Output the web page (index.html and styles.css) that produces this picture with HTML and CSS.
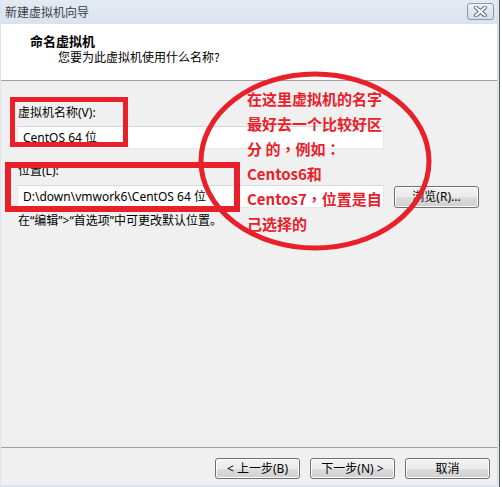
FILE: index.html
```html
<!DOCTYPE html>
<html>
<head>
<meta charset="utf-8">
<link rel="stylesheet" href="styles.css">
</head>
<body>
<div class="screen">
  <div class="window">
    <div class="titlebar">
      <span class="title">新建虚拟机向导</span>
      <div class="close">
        <svg width="17" height="11" viewBox="0 0 17 11">
          <path d="M4 1.5 L13 9.5 M13 1.5 L4 9.5" stroke="#5a6478" stroke-width="4" stroke-linecap="round"/>
          <path d="M4 1.5 L13 9.5 M13 1.5 L4 9.5" stroke="#ffffff" stroke-width="2.2" stroke-linecap="round"/>
        </svg>
      </div>
    </div>
    <div class="client">
      <div class="header">
        <div class="h-title">命名虚拟机</div>
        <div class="h-sub">您要为此虚拟机使用什么名称?</div>
      </div>
      <div class="content">
        <div class="label">虚拟机名称(V):</div>
        <div class="row">
          <div class="input">CentOS 64 位</div>
        </div>
        <div class="label label-loc">位置(L):</div>
        <div class="row">
          <div class="input">D:\down\vmwork6\CentOS 64 位</div>
          <div class="btn btn-browse">浏览(R)...</div>
        </div>
        <div class="hint">在“编辑”&gt;“首选项”中可更改默认位置。</div>
      </div>
      <div class="footer">
        <div class="btn">&lt; 上一步(B)</div>
        <div class="btn">下一步(N) &gt;</div>
        <div class="btn">取消</div>
      </div>
    </div>
  </div>

  <div class="mark mark-name"></div>
  <div class="mark mark-loc"></div>
  <svg class="ellipse" width="238" height="182" viewBox="0 0 238 182">
    <ellipse cx="119" cy="91" rx="114" ry="87" fill="none" stroke="#e8202a" stroke-width="5"/>
  </svg>
  <div class="note">
    <div>在这里虚拟机的名字</div>
    <div>最好去一个比较好区</div>
    <div>分 的<span class="p">，</span>例如<span class="p">：</span></div>
    <div>Centos6和</div>
    <div>Centos7<span class="p">，</span>位置是自</div>
    <div>己选择的</div>
  </div>
</div>
</body>
</html>
```

FILE: styles.css
```css
html, body {
  margin: 0;
  padding: 0;
  background: #ffffff;
}

.screen {
  position: relative;
  width: 502px;
  height: 487px;
  overflow: hidden;
  font-family: "Noto Sans", "Noto Sans CJK SC", sans-serif;
  font-size: 12px;
  color: #000;
}

.window {
  width: 496px;
  height: 485px;
  display: flex;
  flex-direction: column;
  border-left: 1px solid #dbe4ef;
  border-right: 2px solid #d8e2ee;
  border-bottom: 2px solid #dbe4ef;
  box-shadow: 1px 0 0 #5c5c5c;
}

.titlebar {
  height: 24px;
  flex: none;
  display: flex;
  align-items: center;
  justify-content: space-between;
  background: linear-gradient(#e3eaf3, #d9e3ef);
  padding: 0 3px 0 4px;
}

.title {
  color: #3e3e3e;
  font-family: "Noto Sans CJK SC", sans-serif;
  font-size: 12px;
  line-height: 16px;
}

.close {
  width: 25px;
  height: 15px;
  margin-top: -1px;
  border: 1px solid #8b97ab;
  border-radius: 3px;
  background: linear-gradient(#eef2f7, #d5dde8);
  display: flex;
  align-items: center;
  justify-content: center;
}

.client {
  flex: 1;
  display: flex;
  flex-direction: column;
  background: #f0f0f0;
}

.header {
  background: #ffffff;
  border-bottom: 1px solid #a0a0a0;
  padding: 9px 0 15px 29px;
  height: 32px;
}

.h-title {
  font-family: "Noto Sans CJK SC", sans-serif;
  font-weight: bold;
  font-size: 13px;
  line-height: 16px;
}

.h-sub {
  margin-left: 28px;
  font-family: "Noto Sans CJK SC", sans-serif;
  line-height: 16px;
}

.content {
  flex: 1;
  padding: 24px 0 0 16px;
}

.label {
  line-height: 16px;
  padding-left: 1px;
  margin-bottom: 5px;
}

.label-loc {
  margin-top: 14px;
  margin-bottom: 6px;
}

.row {
  display: flex;
  align-items: flex-start;
  gap: 10px;
}

.input {
  width: 367px;
  height: 23px;
  box-sizing: border-box;
  background: #ffffff;
  border: 1px solid #e3e9ef;
  border-top-color: #d5d9de;
  padding-left: 5px;
  line-height: 21px;
}

.btn {
  width: 85px;
  height: 22px;
  box-sizing: border-box;
  border: 1px solid #707070;
  border-radius: 3px;
  background: linear-gradient(#f2f2f2 0%, #ebebeb 50%, #dddddd 51%, #cfcfcf 100%);
  box-shadow: inset 0 0 0 1px #fcfcfc;
  display: flex;
  align-items: center;
  justify-content: center;
  line-height: 16px;
}

.btn-browse {
  margin-top: 1px;
}

.hint {
  margin-top: 5px;
  padding-left: 1px;
  line-height: 16px;
}

.footer {
  border-top: 1px solid #a0a0a0;
  height: 38px;
  box-sizing: border-box;
  padding: 10px 7px 0 0;
  display: flex;
  justify-content: flex-end;
  gap: 10px;
}

.footer .btn {
  height: 21px;
}

.mark {
  position: absolute;
  border: 5px solid #e8202a;
  box-sizing: border-box;
}

.mark-name {
  left: 10px;
  top: 97px;
  width: 118px;
  height: 50px;
}

.mark-loc {
  left: 5px;
  top: 162px;
  width: 235px;
  height: 50px;
  border-width: 6px;
}

.ellipse {
  position: absolute;
  left: 196px;
  top: 70px;
}

.note {
  position: absolute;
  left: 247px;
  top: 86px;
  color: #e8202a;
  font-family: "Noto Sans CJK SC", sans-serif;
  font-weight: bold;
  font-size: 15px;
  line-height: 25px;
  white-space: nowrap;
}

.note .p {
  font-family: "Noto Sans CJK TC", sans-serif;
}
```
